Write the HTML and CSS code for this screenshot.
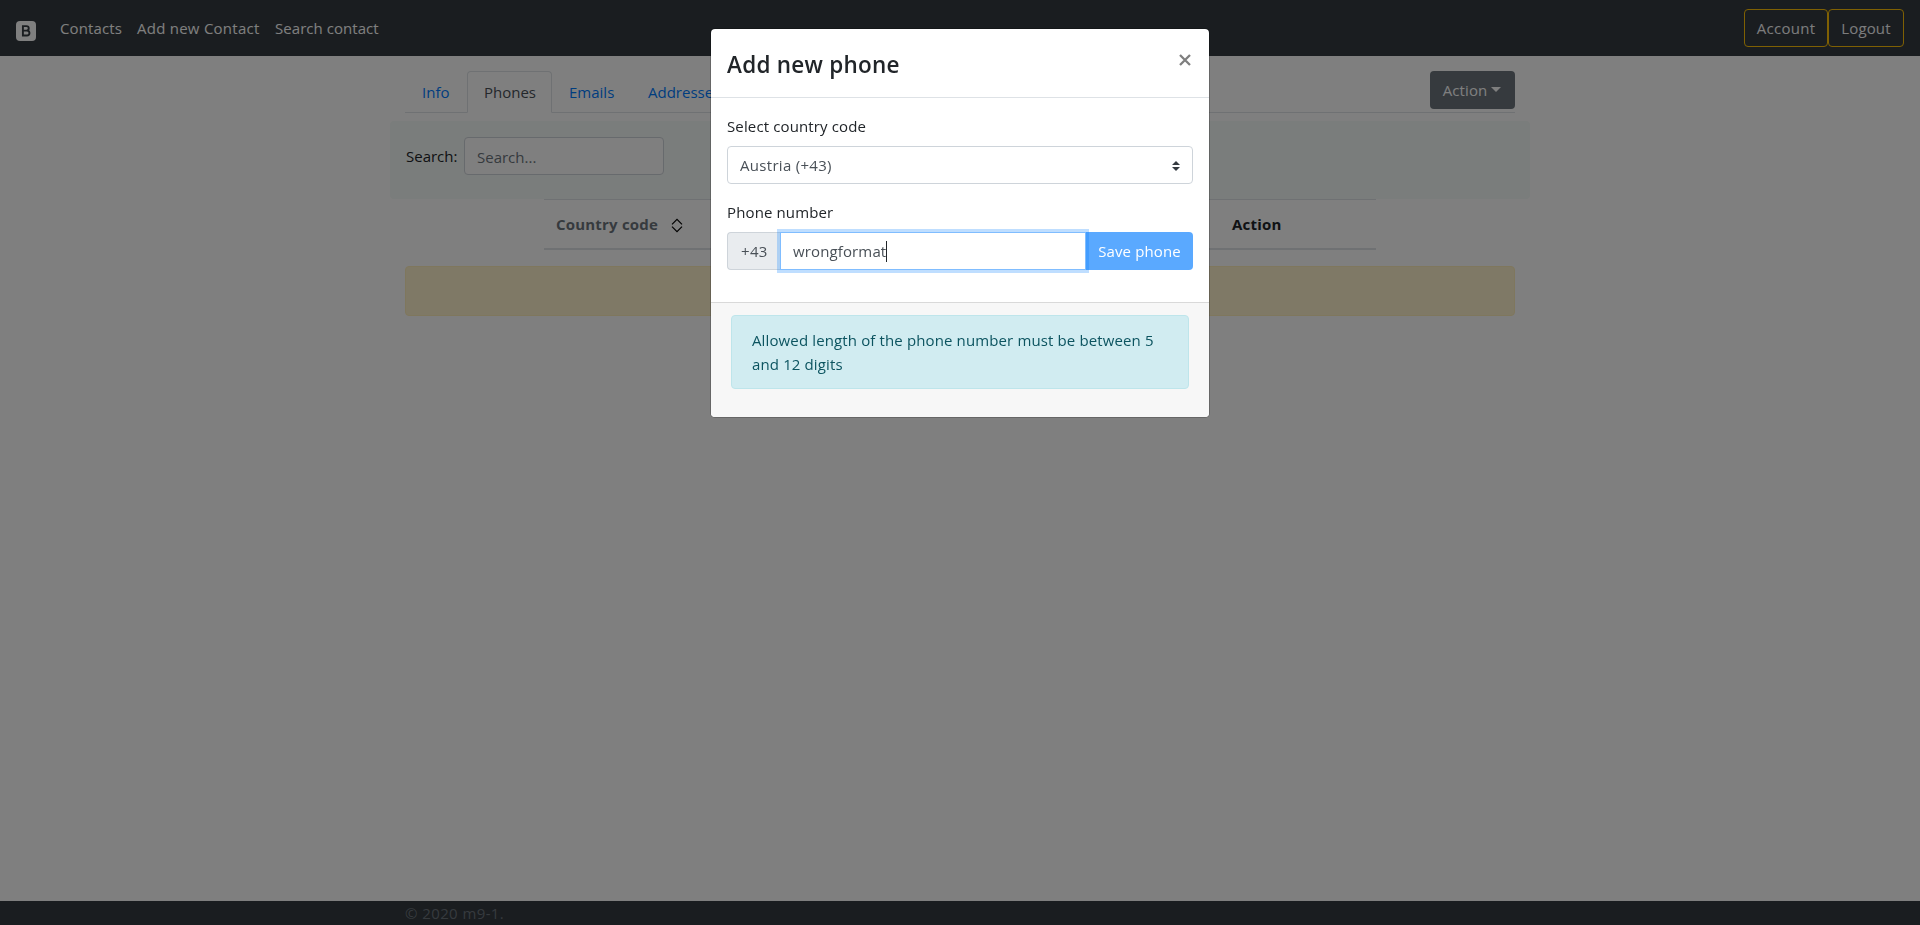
FILE: index.html
```html
<!DOCTYPE html>
<html lang="en">
<head>
<meta charset="utf-8">
<title>Contacts</title>
<link rel="stylesheet" href="styles.css">
</head>
<body>
<nav class="navbar">
  <a class="brand"><svg width="20" height="20" viewBox="0 0 20 20"><rect width="20" height="20" rx="4" fill="#fff"/><g fill="none" stroke="#343a40" stroke-width="1.9"><path d="M6.9 5.1h3.6a2.15 2.15 0 0 1 0 4.5H6.9M10.5 9.6h.5a2.4 2.4 0 0 1 0 4.9H6.9V4.2"/></g></svg></a>
  <a class="nav-item contacts">Contacts</a>
  <a class="nav-item add">Add new Contact</a>
  <a class="nav-item find">Search contact</a>
  <div class="account"><button class="outline wide">Account</button><button class="outline">Logout</button></div>
</nav>
<main class="container">
  <div class="tabs">
    <a class="tab info">Info</a>
    <a class="tab active">Phones</a>
    <a class="tab emails">Emails</a>
    <a class="tab">Addresses</a>
    <button class="action-btn">Action<span class="caret"></span></button>
  </div>
  <div class="search"><label for="q">Search:</label><input id="q" placeholder="Search..."></div>
  <div class="table">
    <div class="th country"><span>Country code</span>
      <svg width="12" height="15" viewBox="0 0 12 15" fill="none" stroke="#000" stroke-width="1.2"><path d="M1 6.3 6 1.3l5 5M1 8.7l5 5 5-5"/></svg>
    </div>
    <div class="th">Action</div>
  </div>
  <div class="warning"></div>
</main>
<footer class="footer"><span>© 2020 m9-1.</span></footer>
<div class="backdrop">
  <section class="modal">
    <header class="modal-head"><h5>Add new phone</h5>
      <svg class="close" width="12" height="12" viewBox="0 0 12 12" stroke="#7f7f7f" stroke-width="2.3"><path d="m1 1 10 10M11 1 1 11"/></svg>
    </header>
    <div class="modal-body">
      <label>Select country code</label>
      <div class="select">Austria (+43)
        <svg width="8" height="10" viewBox="0 0 4 5" fill="#343a40"><path d="M2 0 0 2h4zM2 5 0 3h4z"/></svg>
      </div>
      <label>Phone number</label>
      <div class="group"><span class="prefix">+43</span><div class="phone">wrongformat<i class="cursor"></i></div><button class="save">Save phone</button></div>
    </div>
    <footer class="modal-foot"><div class="notice">Allowed length of the phone number must be between 5 and 12 digits</div></footer>
  </section>
</div>
</body>
</html>
```
FILE: styles.css
```css
* { box-sizing: border-box; }
body { margin: 0; height: 925px; overflow: hidden; display: flex; flex-direction: column; background: #fff; color: #212529; font: 15px/24px "Open Sans", sans-serif; letter-spacing: .13px; }
button, input { font: inherit; letter-spacing: inherit; }
.navbar { height: 56px; background: #343a40; display: flex; align-items: center; padding: 0 16px; color: #fff; }
.brand { width: 44px; height: 20px; margin-top: 6px; }
.brand svg { display: block; }
.nav-item { white-space: nowrap; }
.contacts { width: 77px; }
.add { width: 138px; letter-spacing: .25px; }
.find { letter-spacing: .05px; }
.account { margin-left: auto; display: flex; }
.outline { width: 76px; height: 38px; padding: 0; background: none; border: 1px solid #ffc107; border-radius: 4px; color: #f8f9fa; white-space: nowrap; }
.wide { width: 84px; letter-spacing: .3px; }
.container { width: 1140px; margin: 0 auto; padding-top: 15px; flex: 1; }
.tabs { height: 42px; margin: 0 15px; display: flex; border-bottom: 1px solid #dee2e6; letter-spacing: 0; }
.tab { height: 42px; padding: 8px 16px; border: 1px solid transparent; color: #007bff; white-space: nowrap; }
.info { width: 62px; }
.active { width: 85px; color: #495057; background: #fff; border-color: #dee2e6 #dee2e6 #fff; border-radius: 4px 4px 0 0; }
.emails { width: 79px; }
.action-btn { width: 85px; height: 38px; margin-left: auto; padding: 0 1px 0 0; background: #6c757d; color: #fff; border: 0; border-radius: 4px; letter-spacing: .1px; }
.caret { display: inline-block; margin-left: 4px; vertical-align: 4px; border: 5px solid transparent; border-top-color: #fff; border-bottom: 0; }
.search { height: 78px; margin-top: 8px; padding: 16px; background: #f5faf8; border-radius: 4px; display: flex; letter-spacing: 0; }
.search label { width: 58px; padding-top: 7px; }
.search input { width: 200px; height: 38px; padding: 7px 12px 5px; border: 1px solid #ced4da; border-radius: 4px; }
.search input::placeholder { color: #6c757d; opacity: 1; }
.table { width: 832px; height: 51px; margin-left: 154px; padding: 12px; border-top: 1px solid #dee2e6; border-bottom: 2px solid #dee2e6; display: flex; font-weight: 700; letter-spacing: .2px; }
.country { width: 676px; display: flex; color: #6c757d; }
.country span { width: 101px; white-space: nowrap; }
.country svg { margin: 6px 0 0 14px; }
.warning { height: 50px; margin: 16px 15px 0; background: #fff3cd; border: 1px solid #ffeeba; border-radius: 4px; }
.footer { height: 24px; background: #343a40; color: #6c757d; letter-spacing: .4px; }
.footer span { display: block; width: 1110px; margin: 0 auto; }
.backdrop { position: fixed; inset: 0; background: rgba(0,0,0,.5); padding-top: 28px; }
.modal { width: 500px; height: 390px; margin: 0 auto; background: #fff; background-clip: padding-box; border: 1px solid rgba(0,0,0,.2); border-radius: 5px; overflow: hidden; }
.modal-head { height: 69px; padding: 16px; display: flex; justify-content: space-between; border-bottom: 1px solid #dee2e6; }
h5 { margin: 5px 0 0; font-size: 22.5px; line-height: 30px; font-weight: 600; letter-spacing: .25px; }
.close { margin: 9px 2px 0 0; }
.modal-body { height: 204px; padding: 16px; }
.modal-body label { display: block; height: 32px; }
.select { height: 38px; margin-bottom: 16px; padding: 6px 12px; border: 1px solid #ced4da; border-radius: 4px; color: #495057; display: flex; justify-content: space-between; letter-spacing: .3px; }
.select svg { margin-top: 8px; }
.group { height: 38px; display: flex; }
.prefix { width: 53px; padding: 6px 12px 6px 13px; border: 1px solid #ced4da; border-right: 0; border-radius: 4px 0 0 4px; background: #e9ecef; color: #495057; letter-spacing: .3px; }
.phone { width: 306px; padding: 6px 12px; border: 1px solid #80bdff; box-shadow: 0 0 0 3px rgba(0,123,255,.25); z-index: 1; color: #495057; display: flex; }
.cursor { width: 1px; height: 21px; margin: 2px 0 0; background: #212529; }
.save { flex: 1; padding: 0; border: 0; border-radius: 0 4px 4px 0; background: #5aa9ff; color: #fff; white-space: nowrap; }
.modal-foot { height: 115px; padding: 12px 20px; background: #f7f7f7; border-top: 1px solid #d9d9d9; }
.notice { height: 74px; padding: 12px 20px; border: 1px solid #bee5eb; border-radius: 4px; background: #d1ecf1; color: #0c5460; }
```
